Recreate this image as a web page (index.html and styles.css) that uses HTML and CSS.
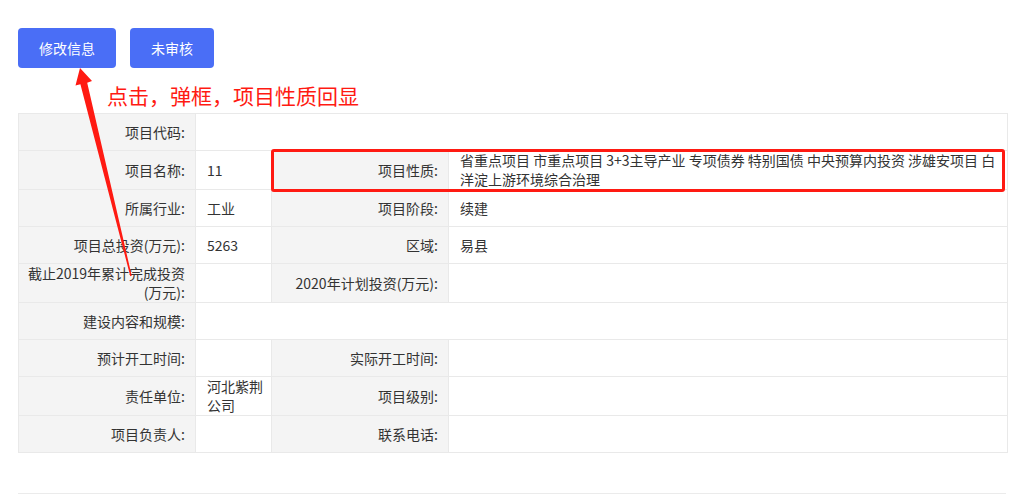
FILE: index.html
```html
<!DOCTYPE html>
<html>
<head>
  <title>项目信息</title>
  <link rel="stylesheet" href="styles.css">
</head>
<body>
  <div class="page">
    <div class="toolbar">
      <button class="btn">修改信息</button>
      <button class="btn">未审核</button>
    </div>

    <div class="note">点击，弹框，项目性质回显</div>

    <div class="info-wrap">
      <table class="info-table">
        <colgroup>
          <col class="c-label">
          <col class="c-short">
          <col class="c-label">
          <col class="c-long">
        </colgroup>
        <tr>
          <th>项目代码:</th>
          <td colspan="3"></td>
        </tr>
        <tr>
          <th>项目名称:</th>
          <td>11</td>
          <th>项目性质:</th>
          <td class="nature">省重点项目 市重点项目 3+3主导产业 专项债券 特别国债 中央预算内投资 涉雄安项目 白洋淀上游环境综合治理</td>
        </tr>
        <tr>
          <th>所属行业:</th>
          <td>工业</td>
          <th>项目阶段:</th>
          <td>续建</td>
        </tr>
        <tr>
          <th>项目总投资(万元):</th>
          <td>5263</td>
          <th>区域:</th>
          <td>易县</td>
        </tr>
        <tr>
          <th>截止2019年累计完成投资(万元):</th>
          <td></td>
          <th>2020年计划投资(万元):</th>
          <td></td>
        </tr>
        <tr>
          <th>建设内容和规模:</th>
          <td colspan="3"></td>
        </tr>
        <tr>
          <th>预计开工时间:</th>
          <td></td>
          <th>实际开工时间:</th>
          <td></td>
        </tr>
        <tr>
          <th>责任单位:</th>
          <td class="unit">河北紫荆公司</td>
          <th>项目级别:</th>
          <td></td>
        </tr>
        <tr>
          <th>项目负责人:</th>
          <td></td>
          <th>联系电话:</th>
          <td></td>
        </tr>
      </table>
      <!-- annotation box around 项目性质 -->
      <div class="mark-box"></div>
    </div>

    <div class="section-line"></div>

    <!-- annotation arrow -->
    <svg class="arrow" width="1034" height="494" viewBox="0 0 1034 494">
      <polygon fill="#ff1a12" points="80,68 92,81 87.2,82.7 131.7,275.8 130.3,276.2 80.4,84.3 75.5,85.6"/>
    </svg>
  </div>
</body>
</html>
```

FILE: styles.css
```css
body { margin: 0; font-family: "Noto Sans CJK SC", "Microsoft YaHei", sans-serif; color: #333; background: #fff; }
.page { position: relative; padding: 28px 18px 0; width: 988px; }

.toolbar { display: flex; gap: 14px; }
.btn {
  height: 40px;
  padding: 0 21px;
  border: none;
  border-radius: 4px;
  background: #4a6ef6;
  color: #fff;
  font-family: inherit;
  font-size: 14px;
  cursor: pointer;
}

.note {
  margin: 13px 0 4px 89px;
  line-height: 28px;
  font-size: 21px;
  color: #ff1a12;
}

.info-wrap { position: relative; }
.info-table {
  width: 989px;
  table-layout: fixed;
  border-collapse: collapse;
  font-size: 14px;
}
.c-label { width: 177px; }
.c-short { width: 76px; }
.c-long { width: 559px; }
.info-table th, .info-table td {
  height: 37px;
  padding: 0 10px;
  border: 1px solid #e9e9e9;
  line-height: 19px;
  box-sizing: border-box;
}
.info-table th {
  background: #f4f4f4;
  font-weight: normal;
  text-align: right;
  padding-left: 6px;
}
.info-table td { text-align: left; padding-left: 11px; }
.info-table td.unit { padding-right: 4px; }
.info-table td.nature { padding-right: 3px; }

.mark-box {
  position: absolute;
  left: 253px;
  top: 36px;
  width: 734px;
  height: 43px;
  border: 3px solid #ff1a12;
  border-radius: 3px;
  box-sizing: border-box;
}

.section-line { margin-top: 40px; border-top: 1px solid #ebebeb; }

.arrow { position: absolute; left: 0; top: 0; pointer-events: none; }
```
